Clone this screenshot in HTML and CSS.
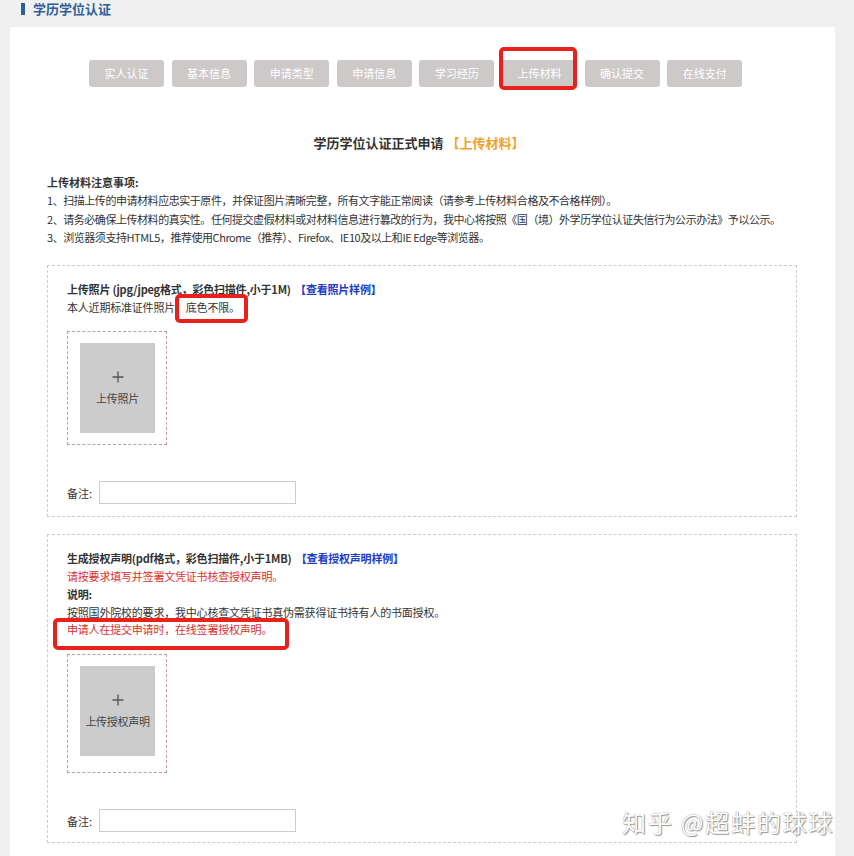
FILE: index.html
```html
<!DOCTYPE html>
<html lang="zh-CN">
<head>
<meta charset="utf-8">
<title>学历学位认证</title>
<link rel="stylesheet" href="styles.css">
</head>
<body>
<div class="page-head"><span class="head-bar"></span><span class="head-title">学历学位认证</span></div>
<div class="card">
  <div class="steps">
    <span class="step">实人认证</span>
    <span class="step">基本信息</span>
    <span class="step">申请类型</span>
    <span class="step">申请信息</span>
    <span class="step">学习经历</span>
    <span class="step">上传材料</span>
    <span class="step">确认提交</span>
    <span class="step">在线支付</span>
  </div>
  <h2 class="form-title">学历学位认证正式申请 <span class="form-title-sub">【上传材料】</span></h2>
  <div class="notes">
    <p class="notes-head">上传材料注意事项:</p>
    <p>1、扫描上传的申请材料应忠实于原件，并保证图片清晰完整，所有文字能正常阅读（请参考上传材料合格及不合格样例）。</p>
    <p>2、请务必确保上传材料的真实性。任何提交虚假材料或对材料信息进行篡改的行为，我中心将按照《国（境）外学历学位认证失信行为公示办法》予以公示。</p>
    <p>3、浏览器须支持HTML5，推荐使用Chrome（推荐）、Firefox、IE10及以上和IE Edge等浏览器。</p>
  </div>

  <section class="upload-box">
    <p class="box-line box-title">上传照片 (jpg/jpeg格式，彩色扫描件,小于1M) <a class="box-link">【查看照片样例】</a></p>
    <p class="box-line">本人近期标准证件照片，底色不限。</p>
    <div class="frame">
      <div class="frame-inner">
        <svg class="plus" width="12" height="12" viewBox="0 0 12 12"><path d="M6 0.5V11.5M0.5 6H11.5" stroke="#555" stroke-width="1.3" fill="none"/></svg>
        <span class="frame-label">上传照片</span>
      </div>
    </div>
    <div class="remark"><label class="remark-label">备注:</label><input class="remark-input" type="text"></div>
  </section>

  <section class="upload-box upload-box-second">
    <p class="box-line box-title">生成授权声明(pdf格式，彩色扫描件,小于1MB) <a class="box-link">【查看授权声明样例】</a></p>
    <p class="box-line box-red">请按要求填写并签署文凭证书核查授权声明。</p>
    <p class="box-line box-title">说明:</p>
    <p class="box-line">按照国外院校的要求，我中心核查文凭证书真伪需获得证书持有人的书面授权。</p>
    <p class="box-line box-red">申请人在提交申请时，在线签署授权声明。</p>
    <div class="frame frame-tall">
      <div class="frame-inner">
        <svg class="plus" width="12" height="12" viewBox="0 0 12 12"><path d="M6 0.5V11.5M0.5 6H11.5" stroke="#555" stroke-width="1.3" fill="none"/></svg>
        <span class="frame-label">上传授权声明</span>
      </div>
    </div>
    <div class="remark"><label class="remark-label">备注:</label><input class="remark-input" type="text"></div>
  </section>

  <div class="mark mark-step"></div>
  <div class="mark mark-photo"></div>
  <div class="mark mark-sign"></div>
  <div class="watermark">知乎 @超蚌的球球</div>
</div>
</body>
</html>
```

FILE: styles.css
```css
html, body {
  overflow: hidden;
}
body {
  margin: 0;
  background: #f0f0f0;
  font-family: "Noto Sans CJK SC", "Microsoft YaHei", sans-serif;
  font-size: 11px;
  color: #333;
}
.page-head {
  display: flex;
  align-items: center;
  gap: 8px;
  height: 17px;
  padding-left: 21px;
}
.head-bar {
  width: 4px;
  height: 12px;
  background: #2f5f98;
}
.head-title {
  font-size: 13px;
  font-weight: bold;
  color: #2f5f98;
  line-height: 17px;
}
.card {
  position: relative;
  margin: 10px 19px 0 10px;
  background: #fff;
  padding: 33px 38px 20px 37px;
}
.steps {
  display: flex;
  gap: 7.6px;
  margin-left: 42px;
}
.step {
  width: 75px;
  height: 27px;
  line-height: 27px;
  text-align: center;
  background: #cdc9c9;
  color: #fff;
  border-radius: 3px;
  font-size: 11px;
}
.form-title {
  margin: 46px 0 0;
  padding-right: 6px;
  text-align: center;
  font-size: 13px;
  font-weight: bold;
  line-height: 20px;
  color: #333;
}
.form-title-sub {
  color: #f0a22e;
}
.notes {
  margin-top: 20px;
}
.notes p {
  margin: 0;
  line-height: 18.3px;
  white-space: nowrap;
  letter-spacing: -0.45px;
}
.notes .notes-head {
  font-weight: bold;
  letter-spacing: 0;
}
.upload-box {
  border: 1px dashed #ccc;
  margin-top: 19px;
  padding: 14px 19px 12px;
}
.upload-box-second {
  margin-top: 17px;
  padding-top: 15px;
  padding-bottom: 10px;
}
.box-line {
  margin: 0;
  line-height: 18px;
  white-space: nowrap;
  letter-spacing: -0.2px;
}
.upload-box-second .box-line {
  line-height: 17.8px;
}
.box-title {
  font-weight: bold;
}
.box-red {
  color: #d9302b;
}
.box-link {
  color: #1c3cc6;
  font-weight: bold;
  margin-left: 2px;
}
.frame {
  width: 75px;
  margin-top: 15px;
  border: 1px dashed #c49a9a;
  padding: 11px 11px 11px 12px;
}
.frame-tall {
  padding-bottom: 16px;
}
.frame-inner {
  height: 90px;
  background: #cccccc;
  display: flex;
  flex-direction: column;
  align-items: center;
  justify-content: center;
  gap: 8px;
}
.frame-label {
  color: #444;
  font-size: 11px;
  line-height: 14px;
  white-space: nowrap;
  letter-spacing: -0.3px;
}
.remark {
  display: flex;
  align-items: center;
  gap: 7px;
  margin-top: 36px;
}
.remark-label {
  font-size: 11px;
  color: #333;
}
.remark-input {
  box-sizing: border-box;
  width: 197px;
  height: 23px;
  margin: 0;
  border: 1px solid #ccc;
  padding: 0 4px;
}
.mark {
  position: absolute;
  box-sizing: border-box;
  border: 4px solid #e8221a;
  border-radius: 5px;
}
.mark-step {
  left: 489px;
  top: 20px;
  width: 78px;
  height: 43px;
}
.mark-photo {
  left: 165px;
  top: 267px;
  width: 73px;
  height: 29px;
}
.mark-sign {
  left: 43px;
  top: 591px;
  width: 236px;
  height: 32px;
}
.watermark {
  position: absolute;
  left: 612px;
  top: 775px;
  font-size: 24px;
  letter-spacing: 1.8px;
  line-height: 40px;
  color: #fff;
  white-space: nowrap;
  text-shadow: 0 0 1px #777, 1px 1px 1px #999;
}
```
